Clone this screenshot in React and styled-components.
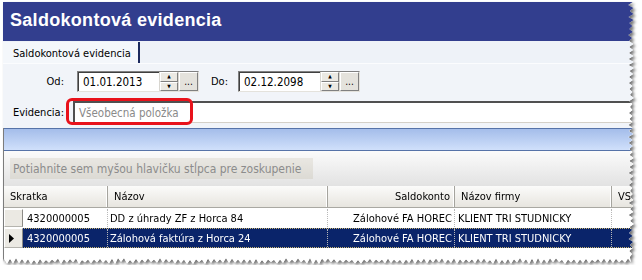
import React from 'react'
import styled, { createGlobalStyle } from 'styled-components'

const GlobalStyle = createGlobalStyle`
  html, body { margin: 0; background: #fff; }
  body {
    font-family: "DejaVu Sans Condensed", "DejaVu Sans", sans-serif;
    font-stretch: semi-condensed;
    font-size: 11px;
    color: #000;
  }
`;

const FRAME_W = 632;
const FRAME_H = 263;

// torn paper outline: straight top and left, ragged right and bottom
function tornOutline(w, h) {
  let seed = 11;
  const rnd = () => { seed = (seed * 9301 + 49297) % 233280; return seed / 233280; };
  const pts = ['0px 0px'];
  let i = 0;
  for (let y = 0; y < h - 6; y += 3, i++) {
    const x = w - (i % 2 ? 5 : 1) - rnd() * 2;
    pts.push(`${x.toFixed(1)}px ${y}px`);
  }
  i = 0;
  for (let x = w - 4; x > 0; x -= 3, i++) {
    const y = h - (i % 2 ? 5 : 1) - rnd() * 2;
    pts.push(`${x}px ${y.toFixed(1)}px`);
  }
  pts.push(`0px ${h - 3}px`);
  return `polygon(${pts.join(',')})`;
}

const Shadow = styled.div`
  margin: 2px 0 0 3px;
  width: ${FRAME_W}px;
  filter: drop-shadow(2px 2px 1.5px rgba(0, 0, 0, 0.55));
`;

const Frame = styled.div`
  width: ${FRAME_W}px;
  height: ${FRAME_H}px;
  background: #fff;
  display: flex;
  flex-direction: column;
  overflow: hidden;
`;

const TitleBar = styled.div`
  height: 39px;
  flex: none;
  background: #323e8e;
  color: #fff;
  display: flex;
  align-items: center;
  padding-left: 7px;
  font-family: "Liberation Sans", Arial, sans-serif;
  font-stretch: normal;
  font-weight: bold;
  font-size: 18px;
  letter-spacing: 0.3px;
  padding-bottom: 2px;
  box-sizing: border-box;
`;

const TabStrip = styled.div`
  height: 22px;
  flex: none;
  background: #eef2f8;
  border-bottom: 1px solid #fbfcfe;
  display: flex;
`;

const Tab = styled.div`
  display: flex;
  align-items: center;
  padding: 1px 7px 0 10px;
  background: #f4f7fb;
  border-right: 2px solid #1c2a5e;
  margin-top: 1px;
`;

const Form = styled.div`
  flex: none;
  background: #f1f4f9;
  padding: 7px 0 5px;
  display: flex;
  flex-direction: column;
  gap: 9px;
`;

const Row = styled.div`
  display: flex;
  align-items: center;
  gap: ${p => p.$gap}px;
  height: ${p => p.$h}px;
`;

const Label = styled.div`
  width: ${p => p.$w ? `${p.$w}px` : 'auto'};
  margin: 0 ${p => p.$mr || 0}px 0 ${p => p.$ml || 0}px;
  text-align: right;
  flex: none;
`;

const DateBox = styled.div`
  width: 122px;
  height: 21px;
  box-sizing: border-box;
  display: flex;
  border-top: 1px solid #808080;
  border-left: 1px solid #808080;
  border-right: 1px solid #e4e2dc;
  border-bottom: 1px solid #e4e2dc;
  background: #d8d6d0;
`;

const DateText = styled.div`
  flex: 1;
  background: #fff;
  border-top: 1px solid #404040;
  border-left: 1px solid #404040;
  padding-left: 4px;
  display: flex;
  align-items: center;
  font-size: 11.5px;
`;

const Spinner = styled.div`
  width: 18px;
  display: flex;
  flex-direction: column;
  margin-left: 1px;
`;

const SpinButton = styled.div`
  flex: 1;
  background: #ebe9e3;
  border-top: 1px solid #fff;
  border-left: 1px solid #fff;
  border-right: 1px solid #808080;
  border-bottom: 1px solid #808080;
  display: flex;
  align-items: center;
  justify-content: center;
  font-size: 5px;
  line-height: 1;
  color: #000;
`;

const DotsButton = styled.div`
  width: 19px;
  margin-left: 1px;
  background: #e4e2dc;
  border-top: 1px solid #fff;
  border-left: 1px solid #fff;
  border-right: 1px solid #808080;
  border-bottom: 1px solid #808080;
  box-sizing: border-box;
  display: flex;
  align-items: flex-end;
  justify-content: center;
  padding-bottom: 3px;
  font-size: 10px;
  line-height: 1;
`;

const EvidenceField = styled.div`
  position: relative;
  flex: 1;
  height: 22px;
  box-sizing: border-box;
  background: #fff;
  border-top: 2px solid #505050;
  border-left: 2px solid #505050;
  border-bottom: 1px solid #d4d0c8;
  display: flex;
  align-items: center;
  padding-left: 4px;
  color: #8a8a8a;
  font-size: 11.5px;
`;

const Highlight = styled.div`
  position: absolute;
  left: -9px;
  top: -5px;
  width: 127px;
  height: 27px;
  box-sizing: border-box;
  border: 3px solid #e8121b;
  border-radius: 6px;
`;

const Grid = styled.div`
  flex: 1;
  display: flex;
  flex-direction: column;
  border-left: 1px solid #7c7c7c;
  background: #fff;
`;

const BlueBar = styled.div`
  height: 23px;
  flex: none;
  box-sizing: border-box;
  border-top: 1px solid #5673a8;
  border-bottom: 1px solid #5673a8;
  background: linear-gradient(#a4bdea, #d0e0fb);
`;

const GroupArea = styled.div`
  height: 35px;
  flex: none;
  box-sizing: border-box;
  padding: 7px 0 0 6px;
  background: linear-gradient(#fbfbfb, #e2e2e2);
`;

const GroupHint = styled.div`
  width: 303px;
  height: 21px;
  box-sizing: border-box;
  padding-left: 3px;
  display: flex;
  align-items: center;
  background: linear-gradient(#e9e7e2, #dcdad4);
  color: #8c8c8c;
  font-size: 12px;
  white-space: nowrap;
`;

const HeaderRow = styled.div`
  height: 22px;
  flex: none;
  display: flex;
  background: linear-gradient(#fbfbfa, #e7e5df);
  border-bottom: 1px solid #a9a8a2;
  box-sizing: border-box;
`;

const HeadCell = styled.div`
  width: ${p => p.$w ? `${p.$w}px` : 'auto'};
  flex: ${p => p.$w ? 'none' : '1'};
  box-sizing: border-box;
  display: flex;
  align-items: center;
  justify-content: ${p => p.$right ? 'flex-end' : 'flex-start'};
  padding: 0 4px 0 6px;
  border-right: 1px solid #a5a49e;
  box-shadow: inset -1px 0 0 #fff;
  white-space: nowrap;
  overflow: hidden;
`;

const DataRow = styled.div`
  height: 20px;
  flex: none;
  display: flex;
  box-sizing: border-box;
  background: ${p => p.$selected ? '#0a246a' : '#fff'};
  color: ${p => p.$selected ? '#fff' : '#000'};
  border-top: 1px dotted ${p => p.$selected ? '#c7b46f' : 'transparent'};
  border-bottom: 1px dotted ${p => p.$selected ? '#c7b46f' : 'transparent'};
`;

const Indicator = styled.div`
  width: 19px;
  flex: none;
  box-sizing: border-box;
  background: #ebe9e3;
  border-top: 1px solid #fff;
  border-left: 1px solid #fff;
  border-right: 1px solid #8c8b86;
  border-bottom: 1px solid #b5b4ae;
  margin: ${p => p.$selected ? '-1px 0' : '0'};
  display: flex;
  align-items: center;
  padding-left: 4px;
`;

const Cell = styled.div`
  width: ${p => p.$w ? `${p.$w}px` : 'auto'};
  flex: ${p => p.$w ? 'none' : '1'};
  box-sizing: border-box;
  display: flex;
  align-items: center;
  justify-content: ${p => p.$right ? 'flex-end' : 'flex-start'};
  padding: 0 2px 0 ${p => p.$pl ?? 2}px;
  border-right: 1px dotted #b8b8b8;
  white-space: nowrap;
  overflow: hidden;
`;

const Arrow = () => (
  <svg width="6" height="9" viewBox="0 0 6 9">
    <path d="M0 0 L5 4.5 L0 9 Z" fill="#000" />
  </svg>
);

const columns = [
  { key: 'code', title: 'Skratka', head: 104, cell: 85, pl: 4 },
  { key: 'name', title: 'Názov', head: 220, cell: 220, pl: 2 },
  { key: 'account', title: 'Saldokonto', head: 127, cell: 127, right: true },
  { key: 'firm', title: 'Názov firmy', head: 157, cell: 157, pl: 3 },
  { key: 'vs', title: 'VS' },
];

const rows = [
  { code: '4320000005', name: 'DD z úhrady ZF z Horca 84', account: 'Zálohové FA HOREC', firm: 'KLIENT TRI STUDNICKY', vs: '' },
  { code: '4320000005', name: 'Zálohová faktúra z Horca 24', account: 'Zálohové FA HOREC', firm: 'KLIENT TRI STUDNICKY', vs: '', selected: true },
];

function DateField({ value }) {
  return (
    <DateBox>
      <DateText>{value}</DateText>
      <Spinner>
        <SpinButton>▲</SpinButton>
        <SpinButton>▼</SpinButton>
      </Spinner>
      <DotsButton>...</DotsButton>
    </DateBox>
  );
}

export default function App() {
  return (
    <>
      <GlobalStyle />
      <Shadow>
        <Frame style={{ clipPath: tornOutline(FRAME_W, FRAME_H) }}>
          <TitleBar>Saldokontová evidencia</TitleBar>
          <TabStrip>
            <Tab>Saldokontová evidencia</Tab>
          </TabStrip>
          <Form>
            <Row $gap={13} $h={21}>
              <Label $w={61}>Od:</Label>
              <DateField value="01.01.2013" />
              <Label $ml={-1} $mr={-3}>Do:</Label>
              <DateField value="02.12.2098" />
            </Row>
            <Row $gap={9} $h={22}>
              <Label $w={61}>Evidencia:</Label>
              <EvidenceField>
                Všeobecná položka
                <Highlight />
              </EvidenceField>
            </Row>
          </Form>
          <Grid>
            <BlueBar />
            <GroupArea>
              <GroupHint>Potiahnite sem myšou hlavičku stĺpca pre zoskupenie</GroupHint>
            </GroupArea>
            <HeaderRow>
              {columns.map(c => (
                <HeadCell key={c.key} $w={c.head} $right={c.right}>
                  {c.title}
                </HeadCell>
              ))}
            </HeaderRow>
            {rows.map((r, i) => (
              <DataRow key={i} $selected={r.selected}>
                <Indicator $selected={r.selected}>{r.selected && <Arrow />}</Indicator>
                {columns.map(c => (
                  <Cell key={c.key} $w={c.cell} $right={c.right} $pl={c.pl}>
                    {r[c.key]}
                  </Cell>
                ))}
              </DataRow>
            ))}
          </Grid>
        </Frame>
      </Shadow>
    </>
  );
}
